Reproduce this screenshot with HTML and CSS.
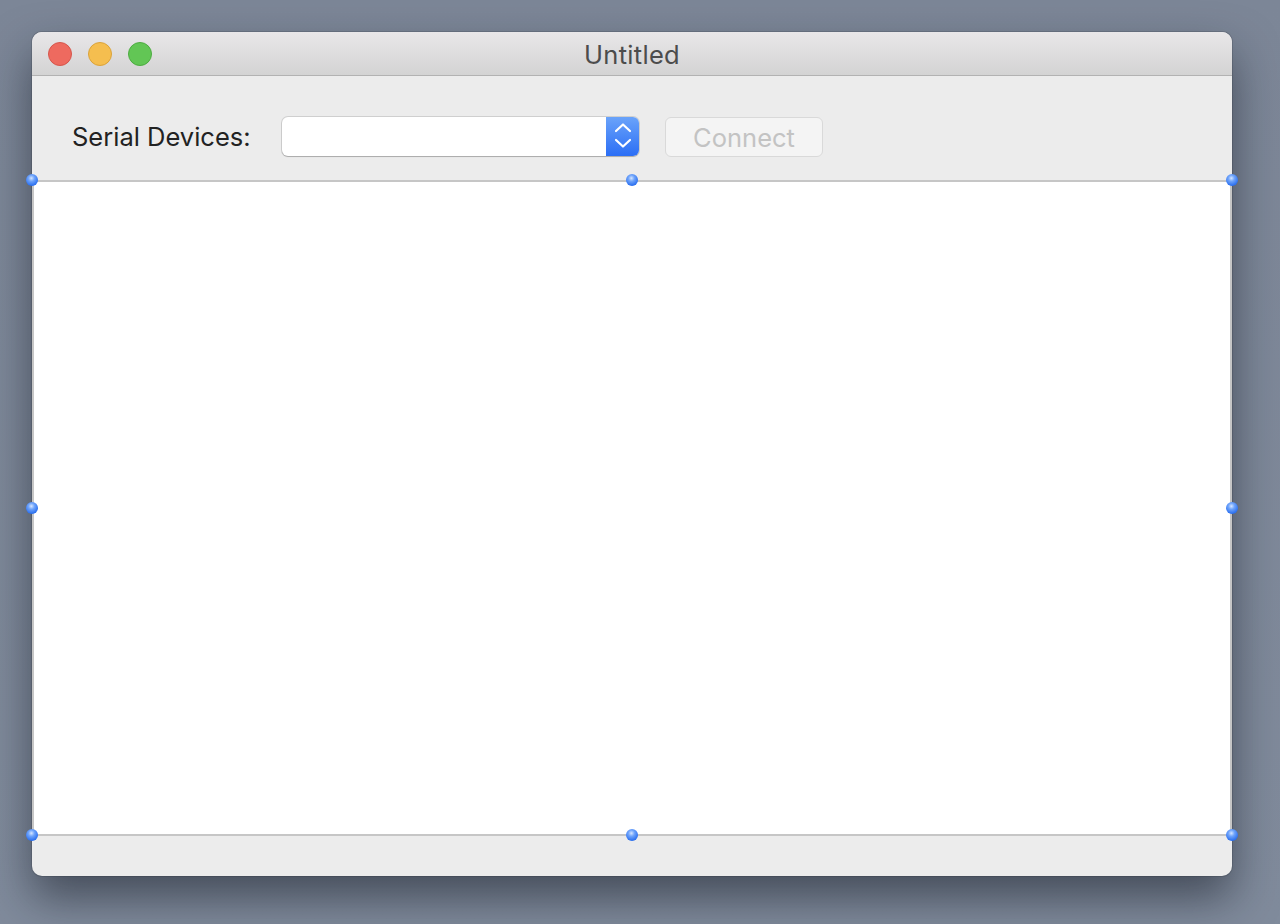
FILE: index.html
```html
<!DOCTYPE html>
<html lang="en">
<head>
    <meta charset="UTF-8">
    <title>Untitled</title>
    <link rel="stylesheet" href="styles.css">
</head>
<body>
    <div class="window">
        <div class="titlebar">
            <div class="lights">
                <span class="light close"></span>
                <span class="light minimize"></span>
                <span class="light zoom"></span>
            </div>
            <div class="title">Untitled</div>
        </div>

        <div class="content">
            <div class="toolbar">
                <label class="label">Serial Devices:</label>
                <div class="popup">
                    <div class="popup-value"></div>
                    <div class="stepper">
                        <svg width="33" height="39" viewBox="0 0 33 39">
                            <path d="M10 14 L17 7.5 L24 14" fill="none" stroke="#fff" stroke-width="2.2" stroke-linecap="round" stroke-linejoin="round"/>
                            <path d="M10 23 L17 29.5 L24 23" fill="none" stroke="#fff" stroke-width="2.2" stroke-linecap="round" stroke-linejoin="round"/>
                        </svg>
                    </div>
                </div>
                <button class="connect" disabled>Connect</button>
            </div>

            <div class="pane">
                <!-- selection handles -->
                <span class="handle h-tl"></span>
                <span class="handle h-tc"></span>
                <span class="handle h-tr"></span>
                <span class="handle h-ml"></span>
                <span class="handle h-mr"></span>
                <span class="handle h-bl"></span>
                <span class="handle h-bc"></span>
                <span class="handle h-br"></span>
            </div>

            <div class="footer"></div>
        </div>
    </div>
</body>
</html>
```

FILE: styles.css
```css
:root {
    --window-bg: #ececec;
    --pane-border: #c6c6c6;
    --accent: #3a83f7;
}

* {
    margin: 0;
    padding: 0;
    box-sizing: border-box;
}

body {
    font-family: Inter, "Noto Sans", sans-serif;
    background: linear-gradient(180deg, #7c8697 0%, #808b9c 100%);
    width: 1280px;
    height: 924px;
    overflow: hidden;
    padding: 32px;
}

.window {
    width: 1200px;
    height: 844px;
    border-radius: 10px;
    background-color: var(--window-bg);
    box-shadow: 0 22px 45px rgba(20, 26, 36, 0.55), 0 0 0 1px rgba(0, 0, 0, 0.12);
    display: flex;
    flex-direction: column;
}

.titlebar {
    height: 44px;
    border-radius: 10px 10px 0 0;
    background: linear-gradient(180deg, #e9e7e9 0%, #d3d3d3 100%);
    border-bottom: 1px solid #b2b2b2;
    display: flex;
    align-items: center;
    position: relative;
    padding-left: 16px;
}

.lights {
    display: flex;
    gap: 16px;
}

.light {
    width: 24px;
    height: 24px;
    border-radius: 50%;
    display: block;
}

.close {
    background-color: #ee6a5f;
    border: 1px solid #d6564c;
}

.minimize {
    background-color: #f5be4f;
    border: 1px solid #dba33a;
}

.zoom {
    background-color: #62c655;
    border: 1px solid #4dac41;
}

.title {
    position: absolute;
    left: 0;
    right: 0;
    top: 7px;
    text-align: center;
    font-size: 25.5px;
    letter-spacing: 0.3px;
    color: #4c4c4c;
    pointer-events: none;
}

.content {
    flex: 1;
    display: flex;
    flex-direction: column;
}

.toolbar {
    display: flex;
    align-items: flex-start;
    padding: 41px 40px 23px 40px;
}

.label {
    width: 210px;
    height: 40px;
    line-height: 40px;
    font-size: 25.5px;
    color: #222;
}

.popup {
    width: 357px;
    height: 39px;
    display: flex;
    border-radius: 6px;
    background-color: #fff;
    box-shadow: 0 0 0 1px rgba(0, 0, 0, 0.12), 0 1px 1px rgba(0, 0, 0, 0.18);
    overflow: hidden;
}

.popup-value {
    flex: 1;
}

.stepper {
    width: 33px;
    background: linear-gradient(180deg, #6aa3fa 0%, #2b6ef5 100%);
    display: flex;
}

.connect {
    margin-left: 26px;
    width: 158px;
    height: 40px;
    font-family: inherit;
    font-size: 25.5px;
    color: #c3c3c3;
    background-color: #f4f4f4;
    border: 1px solid #d9d9d9;
    border-radius: 6px;
}

.pane {
    position: relative;
    height: 656px;
    background-color: #fff;
    border: 2px solid var(--pane-border);
}

.footer {
    flex: 1;
    border-radius: 0 0 10px 10px;
}

.handle {
    position: absolute;
    width: 12px;
    height: 12px;
    border-radius: 50%;
    background: radial-gradient(circle at 45% 35%, #d6e6ff 0%, #6fa4fb 30%, #2e72f0 70%, #1f5bd6 100%);
    transform: translate(-50%, -50%);
}

.h-tl { left: -2px; top: -2.5px; }
.h-tc { left: 598px; top: -2.5px; }
.h-tr { left: calc(100% + 2px); top: -2.5px; }
.h-ml { left: -2px; top: 50%; }
.h-mr { left: calc(100% + 2px); top: 50%; }
.h-bl { left: -2px; top: calc(100% + 1px); }
.h-bc { left: 598px; top: calc(100% + 1px); }
.h-br { left: calc(100% + 2px); top: calc(100% + 1px); }
```
